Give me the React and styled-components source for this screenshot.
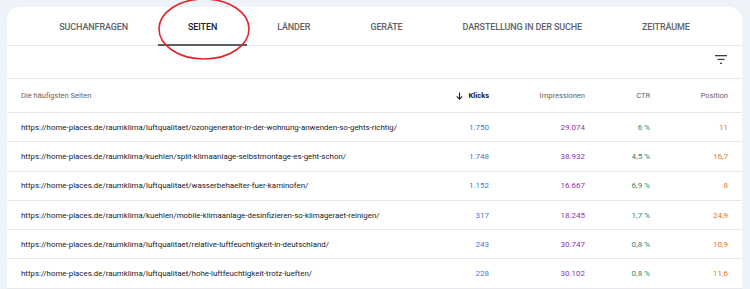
import React from "react";
import styled, { createGlobalStyle } from "styled-components";

const Global = createGlobalStyle`
  html, body { margin: 0; padding: 0; background: #eef3fa; }
  body { font-family: Roboto, "Noto Sans", Arial, sans-serif; overflow: hidden; }
`;

const Page = styled.div`
  position: relative;
  padding: 7px 8px 0 7px;
  height: 289px;
  box-sizing: border-box;
`;

const Card = styled.div`
  background: #fff;
  border-radius: 13px 13px 0 0;
  height: 282px;
  overflow: hidden;
`;

const Tabs = styled.div`
  display: flex;
  justify-content: center;
  height: 39px;
  box-sizing: border-box;
  padding-top: 1px;
  border-bottom: 1px solid #e6e8eb;
`;

const Tab = styled.div`
  position: relative;
  display: flex;
  align-items: center;
  padding: 0 30px;
  font-size: 9px;
  font-weight: 500;
  letter-spacing: -0.12px;
  color: ${(p) => (p.$active ? "#202124" : "#5f6368")};
  white-space: nowrap;
  &::after {
    content: "";
    display: ${(p) => (p.$active ? "block" : "none")};
    position: absolute;
    left: 0;
    right: 0;
    bottom: -1px;
    height: 2px;
    background: #5a5e63;
  }
`;

const FilterBar = styled.div`
  display: flex;
  justify-content: flex-end;
  align-items: center;
  height: 33px;
  box-sizing: border-box;
  padding: 0 15px 5px 0;
  border-bottom: 1px solid #e6e8eb;
`;

const Grid = styled.div`
  display: grid;
  grid-template-columns: 1fr 80px 96px 65px 78px;
  align-items: center;
  padding: 0 14px;
  box-sizing: border-box;
  height: ${(p) => p.$h}px;
  border-bottom: 1px solid #e6e8eb;
`;

const HeadCell = styled.div`
  font-size: 7.5px;
  color: ${(p) => (p.$sorted ? "#202124" : "#5f6368")};
  font-weight: ${(p) => (p.$sorted ? 700 : 400)};
  display: flex;
  align-items: center;
  justify-content: ${(p) => (p.$left ? "flex-start" : "flex-end")};
  gap: 5px;
`;

const UrlCell = styled.div`
  font-size: 7.9px;
  color: #202124;
  white-space: nowrap;
  overflow: hidden;
`;

const NumCell = styled.div`
  font-size: 8px;
  text-align: right;
  color: ${(p) => p.$color};
`;

const Annotation = styled.svg`
  position: absolute;
  left: 0;
  top: 0;
  pointer-events: none;
`;

const tabs = [
  "SUCHANFRAGEN",
  "SEITEN",
  "LÄNDER",
  "GERÄTE",
  "DARSTELLUNG IN DER SUCHE",
  "ZEITRÄUME",
];

const rows = [
  ["https://home-places.de/raumklima/luftqualitaet/ozongenerator-in-der-wohnung-anwenden-so-gehts-richtig/", "1.750", "29.074", "6 %", "11"],
  ["https://home-places.de/raumklima/kuehlen/split-klimaanlage-selbstmontage-es-geht-schon/", "1.748", "38.932", "4,5 %", "16,7"],
  ["https://home-places.de/raumklima/luftqualitaet/wasserbehaelter-fuer-kaminofen/", "1.152", "16.667", "6,9 %", "8"],
  ["https://home-places.de/raumklima/kuehlen/mobile-klimaanlage-desinfizieren-so-klimageraet-reinigen/", "317", "18.245", "1,7 %", "24,9"],
  ["https://home-places.de/raumklima/luftqualitaet/relative-luftfeuchtigkeit-in-deutschland/", "243", "30.747", "0,8 %", "10,9"],
  ["https://home-places.de/raumklima/luftqualitaet/hohe-luftfeuchtigkeit-trotz-lueften/", "228", "30.102", "0,8 %", "11,6"],
];

const FilterIcon = () => (
  <svg width="12" height="9" viewBox="0 0 12 9">
    <rect x="0" y="0" width="12" height="1.3" fill="#3c4043" />
    <rect x="2.5" y="3.8" width="7" height="1.3" fill="#3c4043" />
    <rect x="5" y="7.6" width="2" height="1.3" fill="#3c4043" />
  </svg>
);

const ArrowDown = () => (
  <svg width="7" height="8" viewBox="0 0 7 8">
    <path d="M3.5 0.5 V7 M0.8 4.4 L3.5 7.1 L6.2 4.4" stroke="#202124" strokeWidth="1.1" fill="none" />
  </svg>
);

export default function App() {
  return (
    <>
      <Global />
      <Page>
        <Card>
          <Tabs>
            {tabs.map((t) => (
              <Tab key={t} $active={t === "SEITEN"}>
                {t}
              </Tab>
            ))}
          </Tabs>
          <FilterBar>
            <FilterIcon />
          </FilterBar>
          <Grid $h={34}>
            <HeadCell $left>Die häufigsten Seiten</HeadCell>
            <HeadCell $sorted>
              <ArrowDown />
              Klicks
            </HeadCell>
            <HeadCell>Impressionen</HeadCell>
            <HeadCell>CTR</HeadCell>
            <HeadCell>Position</HeadCell>
          </Grid>
          {rows.map((r) => (
            <Grid key={r[0]} $h={29.3}>
              <UrlCell>{r[0]}</UrlCell>
              <NumCell $color="#3c7be0">{r[1]}</NumCell>
              <NumCell $color="#8a36b4">{r[2]}</NumCell>
              <NumCell $color="#1f8a68">{r[3]}</NumCell>
              <NumCell $color="#e0782a">{r[4]}</NumCell>
            </Grid>
          ))}
        </Card>
        <Annotation width="750" height="70" viewBox="0 0 750 70">
          <ellipse cx="204" cy="29" rx="45" ry="30" fill="none" stroke="#e3242b" strokeWidth="1.6" />
        </Annotation>
      </Page>
    </>
  );
}
